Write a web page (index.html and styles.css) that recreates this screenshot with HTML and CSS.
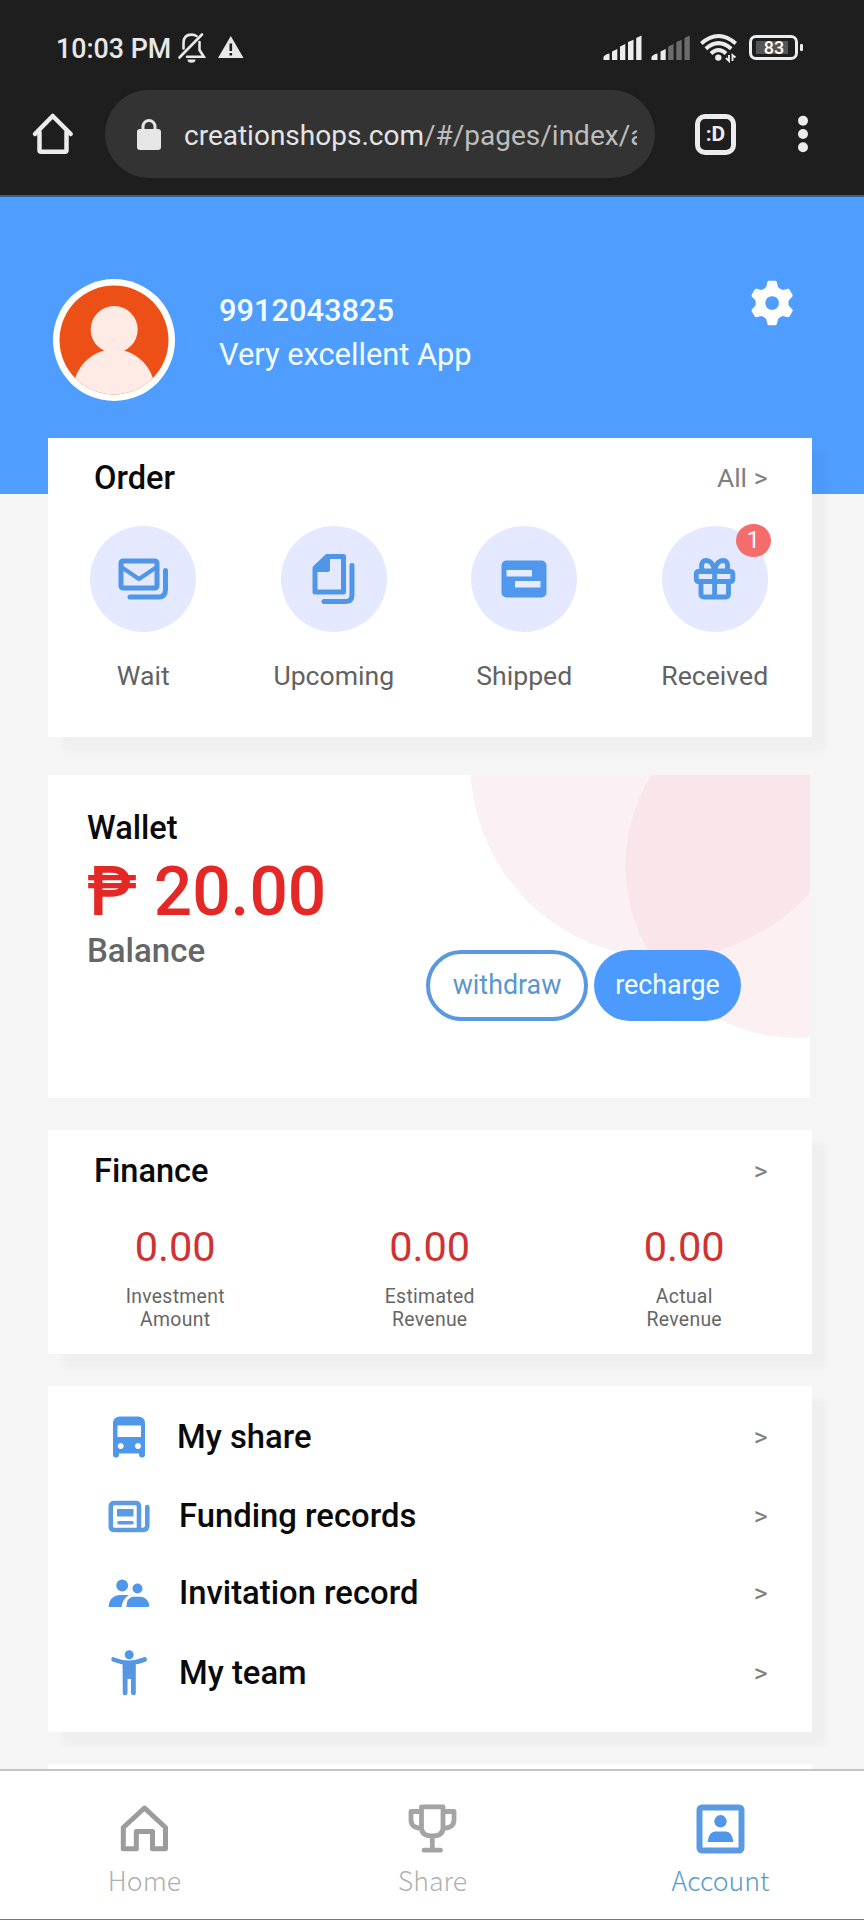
FILE: index.html
```html
<!DOCTYPE html>
<html lang="en">
<head>
<meta charset="utf-8">
<title>Account</title>
<link rel="stylesheet" href="styles.css">
</head>
<body>
<div class="phone">
  <header class="chrome">
    <div class="status">
      <span class="clock">10:03 PM</span>
      <svg class="bell" width="28" height="30" viewBox="178 33 28 30" fill="none" stroke="#e8e8e8" stroke-width="2.6" stroke-linecap="round">
        <path d="M179.500 57.500 L202.000 34.500"/><path d="M183.500 48.500 V43 C183.500 37 187 34.600 191.500 34.600 C193.500 34.600 195 35 196.500 36"/><path d="M199.500 42 V50 L203.800 56.800 H187"/><path d="M187.500 59.500 H195.500 A4 3.200 0 0 1 187.500 59.500Z" fill="#e8e8e8" stroke="none"/>
      </svg>
      <svg class="warn" width="27" height="24" viewBox="217 35 27 24"><path d="M230.800 36 L243.500 58 H218Z" fill="#e8e8e8"/><path d="M230.800 43.500 V51 M230.800 53 V55.500" stroke="#1e1e1e" stroke-width="2.600"/></svg>
      <svg class="signals" width="88" height="26" viewBox="603 35 88 26" fill="#ececec">
        <path d="M603.500 60 V57 Q605 54 609.500 53.500 V60ZM612 60V51.500L617.300 49V60ZM620 60V46.500L625.300 44V60ZM628 60V42L633.500 39.800V60ZM636.200 60V38L641.500 35.500V60Z"/>
        <path d="M651.500 60 V57 Q653 54 657.500 53.500 V60ZM660.500 60V51.500L665.700 49V60Z"/>
        <path fill="#6c6c6c" d="M668.200 60V46.500L673.600 44V60ZM676.300 60V42L681.700 39.800V60ZM684.500 60V38L689.800 35.500V60Z"/>
      </svg>
      <svg class="wifi" width="38" height="28" viewBox="700 34 38 28" fill="none" stroke="#ececec" stroke-width="3.900">
        <path d="M701.300 43.500 Q718.500 28.500 735.700 43.500"/><path d="M705.800 48.700 Q718.500 37.500 731.200 48.700"/><path d="M711 53.500 Q718.500 46.500 726 53.500"/><circle cx="718.300" cy="57.600" r="3.200" fill="#ececec" stroke="none"/><path d="M729 55 V61 L726 58 M732.500 61 V55 L735.500 57.500" stroke-width="1.900"/>
      </svg>
      <span class="battery"><span class="level">83</span></span>
      <span class="tip"></span>
    </div>
    <div class="toolbar">
      <svg class="home-ic" width="42" height="42" viewBox="32 114 42 42" fill="none" stroke="#ececec" stroke-width="4.500" stroke-linejoin="round" stroke-linecap="round"><path d="M35 135 L52.700 117 L70.700 135"/><path d="M39.500 133 V151 Q39.500 152.700 41 152.700 H65 Q66.500 152.700 66.500 151 V133"/></svg>
      <div class="url">
        <svg class="lock" width="26" height="32" viewBox="136 117 26 32"><rect x="137" y="128" width="24" height="21" rx="3" fill="#e6e6e6"/><path d="M143 130 V125.500 A6 6 0 0 1 155 125.500 V130" fill="none" stroke="#e6e6e6" stroke-width="3"/></svg>
        <span class="address">creationshops.com<span class="path">/#/pages/index/a</span></span>
      </div>
      <span class="tabs">:D</span>
      <svg class="dots" width="12" height="38" viewBox="797 115 12 38" fill="#ececec"><circle cx="803" cy="120.700" r="5"/><circle cx="803" cy="134" r="5"/><circle cx="803" cy="147.300" r="5"/></svg>
    </div>
  </header>

  <section class="profile">
    <svg class="avatar" width="122" height="122" viewBox="53.500 279 122 122">
      <defs><clipPath id="disc"><circle cx="114.500" cy="340" r="54.500"/></clipPath></defs>
      <circle cx="114.500" cy="340" r="61" fill="#fffffb"/>
      <g clip-path="url(#disc)"><rect x="58" y="284" width="114" height="114" fill="#ec5017"/><circle cx="114.700" cy="329.500" r="23.500" fill="#ffebe6"/><path d="M74 384 C78 365 93 349.500 114.500 349.500 S151 365 155 384 L150 402 H78Z" fill="#ffebe6"/></g>
    </svg>
    <div class="who"><div class="phone-no">9912043825</div><div class="motto">Very excellent App</div></div>
    <svg class="gear" width="42" height="46" viewBox="751.500 280 42 46"><path fill="#fff" fill-rule="evenodd" d="M769.500 280.800 H775.700 Q777 280.800 777.300 282 L778.500 287 Q780.800 289.300 783.500 290 L788 288.800 Q789.300 288.500 790 289.500 L793 294.800 Q793.500 296 792.500 297 L789.300 300.300 Q788.600 303 789.300 305.700 L792.500 309 Q793.500 310 793 311.200 L790 316.500 Q789.300 317.500 788 317.200 L783.500 316 Q780.800 316.700 778.500 319 L777.300 324 Q777 325.200 775.700 325.200 H769.500 Q768.200 325.200 767.900 324 L766.700 319 Q764.400 316.700 761.700 316 L757.200 317.200 Q755.900 317.500 755.200 316.500 L752.200 311.200 Q751.700 310 752.700 309 L755.900 305.700 Q756.600 303 755.900 300.300 L752.700 297 Q751.700 296 752.200 294.800 L755.200 289.500 Q755.900 288.500 757.200 288.800 L761.700 290 Q764.400 289.300 766.700 287 L767.900 282 Q768.200 280.800 769.500 280.800Z M772.600 296.200 A6.800 6.800 0 1 0 772.610 296.200Z"/></svg>
  </section>

  <main class="cards">
    <section class="card order">
      <div class="head"><h2>Order</h2><span class="more">All &gt;</span></div>
      <div class="order-grid">
        <div class="item"><span class="disc"><svg width="52" height="44" viewBox="117.500 556.500 52 44" fill="none" stroke="#5096e6" stroke-width="5" stroke-linejoin="round" stroke-linecap="round"><rect x="121.500" y="560.500" width="36" height="27" rx="2"/><path d="M122.500 567 L139.500 578.500 L156.500 567" stroke-width="4"/><path d="M166 570 V589 Q166 596.500 159 596.500 H130.500"/></svg></span><span>Wait</span></div>
        <div class="item"><span class="disc"><svg width="46" height="54" viewBox="309 552 46 54" fill="none" stroke="#5096e6" stroke-width="5" stroke-linejoin="round" stroke-linecap="round"><path d="M325 556.500 H341.500 V592 H313 V568Z"/><path d="M313.500 569.500 L325.500 557 V569.500Z" fill="#5096e6"/><path d="M350 565.500 V595 Q350 601.500 343.500 601.500 H322"/></svg></span><span>Upcoming</span></div>
        <div class="item"><span class="disc"><svg width="46" height="38" viewBox="502.500 560 46 38"><rect x="503" y="560.500" width="45" height="37" rx="5" fill="#4f98ee"/><path d="M508 570 H533.500 V576.500 H508Z M516.500 581 H542 V587.500 H516.500Z" fill="#e7ecff"/></svg></span><span>Shipped</span></div>
        <div class="item"><span class="disc"><svg width="44" height="44" viewBox="693 557 44 44" fill="none" stroke="#5096e6" stroke-width="4.900" stroke-linejoin="round"><rect x="696.300" y="571.500" width="36.500" height="10" rx="2"/><path d="M701 582 V594 Q701 597 704 597 H725.500 Q728.500 597 728.500 594 V582"/><path d="M714.600 571 V597"/><path d="M714 571 H702.500 C700.500 566 701.500 561 705.500 560.500 C710.500 560 713.500 565 714.600 570 C715.700 565 718.700 560 723.700 560.500 C727.700 561 728.700 566 726.700 571Z"/></svg><span class="badge">1</span></span><span>Received</span></div>
      </div>
    </section>

    <section class="card wallet">
      <svg class="bubbles" width="340" height="264" viewBox="469.500 775 340 264"><circle cx="664" cy="764" r="194" fill="#fbf0f4"/><circle cx="797" cy="866" r="172" fill="#f6c4d2" fill-opacity=".26"/></svg>
      <h2>Wallet</h2>
      <div class="amount">₱ 20.00</div>
      <div class="balance">Balance</div>
      <div class="actions"><span class="btn outline">withdraw</span><span class="btn solid">recharge</span></div>
    </section>

    <section class="card finance">
      <div class="head"><h2>Finance</h2><span class="more">&gt;</span></div>
      <div class="stats">
        <div><b>0.00</b><span>Investment<br>Amount</span></div>
        <div><b>0.00</b><span>Estimated<br>Revenue</span></div>
        <div><b>0.00</b><span>Actual<br>Revenue</span></div>
      </div>
    </section>

    <section class="card list">
      <div class="row share"><span class="ic"><svg width="34" height="42" viewBox="111.500 1415.500 34 42"><path fill="#4f97ea" fill-rule="evenodd" d="M119 1416 H138 Q144.500 1416.500 144.500 1423 V1454 Q144.500 1457 142 1457 H141 Q138.500 1457 138.500 1454 V1453 H118.500 V1454 Q118.500 1457 116 1457 H115 Q112.500 1457 112.500 1454 V1423 Q112.500 1416.500 119 1416Z M117 1425 H140.500 V1436.500 H117Z M120.200 1442.500 A3 3 0 1 0 120.210 1442.500Z M137.500 1442.500 A3 3 0 1 0 137.510 1442.500Z"/></svg></span><span class="name">My share</span><span class="more">&gt;</span></div>
      <div class="row funding"><span class="ic"><svg width="42" height="33" viewBox="109 1499.500 42 33" fill="none" stroke="#5c9ae2" stroke-width="4.600" stroke-linecap="round"><path d="M140 1529.500 V1506 Q140 1502.500 136.500 1502.500 H115.500 Q111.800 1502.500 111.800 1506 V1526 Q111.800 1529.500 115.500 1529.500 H143.500 Q148.300 1529.500 148.300 1525 V1506.500"/><path d="M118 1508.500 H134.500 V1516 H118Z" fill="#5c9ae2" stroke="none"/><path d="M120 1522.200 H133" stroke-width="3.600"/></svg></span><span class="name">Funding records</span><span class="more">&gt;</span></div>
      <div class="row invite"><span class="ic"><svg width="42" height="29" viewBox="109.500 1577 42 29" fill="#4f97ea"><circle cx="123.700" cy="1583.500" r="5.900"/><circle cx="139" cy="1586.500" r="5"/><path d="M110 1605 Q110.500 1594.500 120.500 1593 H130.500 C126.500 1595.500 123.500 1599.500 123.200 1605Z M128 1605 Q128 1595.500 134.500 1594.800 H142.500 Q149 1595.500 150.800 1603 Q151 1605 149.500 1605Z"/></svg></span><span class="name">Invitation record</span><span class="more">&gt;</span></div>
      <div class="row team"><span class="ic"><svg width="38" height="46" viewBox="111 1650 38 46"><circle cx="130.200" cy="1654.700" r="4.500" fill="#4f97ea"/><path d="M114.500 1659.500 Q130 1666 145.700 1659.500" fill="none" stroke="#5597e2" stroke-width="4.600" stroke-linecap="round"/><path fill="#5597e2" d="M123.500 1661 H136.800 V1693 Q136.800 1695.300 134.500 1695.300 T132 1693 V1679 H128.500 V1693 Q128.500 1695.300 126 1695.300 T123.800 1693Z"/></svg></span><span class="name">My team</span><span class="more">&gt;</span></div>
    </section>
    <section class="card next"></section>
  </main>

  <nav class="tabbar">
    <div class="tab"><svg width="49" height="50" viewBox="120 1804 49 50" fill="none" stroke="#9c9c9c" stroke-width="5" stroke-linejoin="round"><path d="M123.300 1827.500 L144.500 1808 L165.500 1827.500 V1848.800 H152.500 V1831.500 H136.300 V1848.800 H123.300Z"/></svg><span>Home</span></div>
    <div class="tab"><svg width="49" height="50" viewBox="409 1804 49 50" fill="none" stroke="#a4a4a4" stroke-width="4.800" stroke-linejoin="round"><path d="M422.500 1806.800 H444 V1828 Q444 1836 433.300 1836 T422.500 1828Z M422.500 1811.500 H412 V1820 Q412 1828 423 1828.500 M444 1811.500 H455 V1820 Q455 1828 443.500 1828.500 M433.300 1836 V1850"/><path d="M425 1850.200 H441.500" stroke-linecap="round"/></svg><span>Share</span></div>
    <div class="tab active"><svg width="49" height="50" viewBox="697.500 1804 49 50"><rect x="701" y="1807.500" width="42" height="43" rx="2.500" fill="none" stroke="#5a9ae2" stroke-width="6"/><circle cx="722" cy="1821.300" r="6.200" fill="#4f97ea"/><path d="M709 1842 Q710.500 1831.500 716.500 1831.500 H727.500 Q733.500 1831.500 735 1842Z" fill="#4f97ea"/></svg><span>Account</span></div>
  </nav>
</div>
</body>
</html>
```

FILE: styles.css
```css
* { box-sizing: border-box; }
body { margin: 0; }
svg { display: block; flex: none; overflow: visible; }
h2 { margin: 0; font-size: 32.6px; font-weight: 500; line-height: 38px; color: #0a0a0a; }

.phone {
  width: 864px; height: 1920px; overflow: hidden;
  display: flex; flex-direction: column;
  background: #f5f5f5; font-family: Roboto, "Noto Sans", sans-serif;
}

/* system status bar and browser toolbar */
.chrome { height: 197px; flex: none; background: #1e1e1e; border-bottom: 2px solid #35608f; }
.status { height: 90px; padding: 33px 0 0 56px; display: flex; align-items: flex-start; }
.clock { width: 122px; font-size: 26.8px; font-weight: 500; line-height: 32px; color: #e8e8e8; white-space: nowrap; }
.warn { margin: 2px 0 0 11px; }
.signals { margin: 2px 0 0 359px; }
.wifi { margin: 1px 0 0 9px; }
.battery {
  width: 49px; height: 25px; margin: 2px 0 0 11px; padding: 3px;
  border: 3px solid #ececec; border-radius: 7px; background: #1e1e1e;
}
.level {
  display: flex; align-items: center; justify-content: center; width: 32px; height: 13px; margin-left: 1px;
  padding-left: 4px; background: #555; color: #fff; font-size: 18px; font-weight: 500; line-height: 13px;
}
.tip { width: 3px; height: 7px; margin: 11px 0 0 2px; border-radius: 1px; background: #ececec; }
.toolbar { display: flex; align-items: center; height: 88px; padding-left: 32px; }
.url {
  width: 550px; height: 88px; margin-left: 31px; padding: 0 18px 0 31px;
  display: flex; align-items: center; border-radius: 44px; background: #333;
}
.address {
  flex: 1; min-width: 0; margin-left: 22px; padding-top: 3px; overflow: hidden; white-space: nowrap;
  font-size: 28px; line-height: 44px; color: #e4e4e4;
}
.path { color: #bdbdbd; }
.tabs {
  width: 41px; height: 41px; margin-left: 40px; border: 5px solid #ececec; border-radius: 10px;
  display: flex; align-items: center; justify-content: center;
  font-size: 21px; font-weight: 700; line-height: 20px; color: #ececec;
}
.dots { margin-left: 61px; }

.profile {
  height: 297px; flex: none; padding: 82px 71px 0 53px; display: flex; align-items: flex-start; background: #4f9dff;
}
.who { flex: 1; margin: 9.5px 0 0 44px; color: #f4fdff; font-size: 30.8px; line-height: 44px; }
.phone-no { font-weight: 500; }
.gear { margin-top: 1px; }

.cards { flex: 1; min-height: 0; margin-top: -56.5px; padding: 0 52px 0 48px; overflow: hidden; }
.card { background: #fff; width: 763.5px; position: relative; box-shadow: 14px 14px 5px rgba(0, 0, 0, .022); }
.head { display: flex; justify-content: space-between; padding: 0 44px 0 46px; }
.more { font-size: 26.5px; line-height: 38px; color: #808080; }

.order { height: 299.5px; padding-top: 21.5px; }
.order-grid { display: grid; grid-template-columns: repeat(4, 1fr); width: 762px; margin-top: 29px; }
.item { display: flex; flex-direction: column; align-items: center; font-size: 26.6px; line-height: 32px; color: #626262; }
.disc {
  position: relative; display: flex; align-items: center; justify-content: center;
  width: 106px; height: 106px; margin-bottom: 28px; border-radius: 50%; background: #e5e9ff;
}
.badge {
  position: absolute; top: -2px; right: -3px; width: 35px; height: 33px; border-radius: 50%;
  background: #f56c6c; color: #fff; font-size: 24px; line-height: 32px; text-align: center;
}

.wallet { height: 323px; margin-top: 38px; padding: 34px 0 0 39px; box-shadow: none; width: 762px; overflow: hidden; }
.bubbles { position: absolute; top: 0; right: 0; overflow: hidden; }
.amount { font-size: 67.6px; font-weight: 500; line-height: 80px; margin-top: 5px; color: #e32826; position: relative; white-space: pre; }
.balance { font-size: 33px; font-weight: 500; line-height: 38px; margin-top: 0; color: #666; }
.actions { position: relative; display: flex; gap: 6px; margin: -20px 0 0 339px; }
.btn { display: flex; align-items: center; justify-content: center; height: 71px; padding-bottom: 2px; border-radius: 36px; font-size: 26.8px; }
.outline { width: 162px; background: #fff; border: 4px solid #5899e2; color: #5b97cc; }
.solid { width: 147px; background: #4d9aff; color: #f4ffff; }

.finance { height: 224px; margin-top: 32px; padding-top: 22px; }
.stats { display: grid; grid-template-columns: repeat(3, 1fr); text-align: center; margin-top: 32px; }
.stats b { display: block; font-size: 41.5px; font-weight: 400; line-height: 50px; color: #cf3232; }
.stats span { display: block; margin-top: 12.5px; font-size: 19.4px; line-height: 23.3px; letter-spacing: .3px; color: #666; }

.list { height: 346px; margin-top: 32px; padding-top: 11px; }
.row { display: flex; align-items: center; height: 78px; padding: 0 44px 0 51px; }
.ic { width: 60px; display: flex; justify-content: center; margin-right: 20px; }
.name { flex: 1; font-size: 32.8px; font-weight: 500; line-height: 38px; color: #0a0a0a; }
.share .ic { margin-right: 18px; }
.share { height: 80px; }
.invite { height: 76px; }
.team { height: 84px; }
.next { height: 20px; margin-top: 32px; }

.tabbar {
  flex: none; height: 151px; display: grid; grid-template-columns: repeat(3, 1fr);
  background: #fff; border-top: 2px solid #c6c6c6; border-bottom: 1px solid #777;
}
.tab {
  display: flex; flex-direction: column; align-items: center; padding: 33px 0 0 1px;
  font-family: "Noto Sans CJK SC", sans-serif; font-weight: 300; font-size: 26.7px; line-height: 32px; color: #b0b0b0;
}
.tab span { margin-top: 10px; }
.active { color: #5b9bc8; }
```
